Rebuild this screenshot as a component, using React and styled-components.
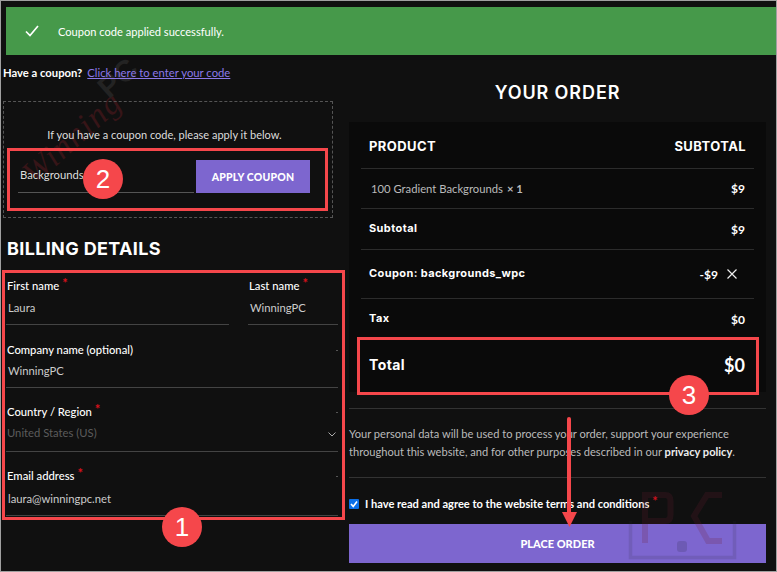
import React from "react";
import styled, { createGlobalStyle } from "styled-components";

const Global = createGlobalStyle`
  html, body {
    margin: 0;
    padding: 0;
    background: #101010;
  }
  * {
    box-sizing: border-box;
  }
`;

const Page = styled.div`
  position: relative;
  width: 777px;
  height: 572px;
  overflow: hidden;
  background: #101010;
  border: 1px solid #a0a0a0;
  color: #fff;
  font-family: Lato, "Liberation Sans", sans-serif;
  font-size: 11.25px;
`;

const Notice = styled.div`
  display: flex;
  align-items: center;
  gap: 19px;
  height: 48px;
  margin: 6px 0 0 5px;
  padding-left: 19px;
  background: #46994a;
  font-size: 11.1px;
`;

const Columns = styled.div`
  position: relative;
  z-index: 1;
  display: flex;
`;

const LeftCol = styled.div`
  width: 348px;
  padding: 10px 0 0 2px;
`;

const RightCol = styled.div`
  width: 417px;
  padding-top: 27px;
`;

const CouponLine = styled.div`
  display: flex;
  gap: 5px;
  font-weight: 700;
  line-height: 16px;
`;

const CouponLink = styled.a`
  color: #8c78e8;
  font-size: 11.3px;
  font-weight: 400;
  text-decoration: underline;
`;

const CouponBox = styled.div`
  width: 330px;
  height: 117px;
  margin-top: 20px;
  padding: 25px 14px 0;
  border: 1px dashed #555;
`;

const CouponHint = styled.p`
  margin: 0 7px 0 0;
  color: #ddd;
  font-size: 11px;
  text-align: center;
  line-height: 16px;
`;

const CouponRow = styled.div`
  display: flex;
  gap: 2px;
  margin-top: 17px;
`;

const CouponInput = styled.div`
  width: 176px;
  height: 33px;
  padding: 8px 2px 0;
  border-bottom: 1px solid #555;
  color: #ddd;
`;

const ApplyButton = styled.div`
  display: flex;
  align-items: center;
  justify-content: center;
  width: 114px;
  height: 33px;
  background: #7d66cf;
  font-size: 10.5px;
  font-weight: 900;
  letter-spacing: 0.2px;
`;

const SectionTitle = styled.h2`
  margin: 20px 0 0 4px;
  font-family: Inter, "Liberation Sans", sans-serif;
  font-size: 18px;
  line-height: 22px;
  font-weight: 700;
  letter-spacing: 0.35px;
`;

const Fields = styled.div`
  display: flex;
  flex-direction: column;
  width: 332px;
  margin: 18px 0 0 3px;
`;

const NameRow = styled.div`
  display: flex;
  gap: 19px;
`;

const Field = styled.div`
  flex: ${(p) => p.$flex || "0 0 auto"};
  width: ${(p) => p.$w || "100%"};
  height: ${(p) => p.$h || 63}px;
  padding-top: ${(p) => p.$top || 0}px;
  border-bottom: 1px solid #444;
`;

const Label = styled.div`
  display: flex;
  justify-content: space-between;
  padding-left: 1px;
  font-weight: 500;
  line-height: 16px;
`;

const Tick = styled.span`
  align-self: center;
  width: 2px;
  height: 1px;
  background: #555;
`;

const Required = styled.span`
  color: #d8101c;
  font-size: 13px;
  font-weight: 700;
  line-height: 0;
  margin-left: 3px;
  vertical-align: 2px;
`;

const Value = styled.div`
  display: flex;
  align-items: center;
  justify-content: space-between;
  margin-top: ${(p) => p.$gap || 6}px;
  padding-left: ${(p) => (p.$flush ? 1 : 2)}px;
  padding-right: 2px;
  color: ${(p) => (p.$muted ? "#5c5c5c" : "#ccc")};
  line-height: 16px;
`;

const Chevron = styled.svg`
  margin-top: 2px;
`;

const OrderTitle = styled.h2`
  margin: 0;
  font-family: Inter, "Liberation Sans", sans-serif;
  font-size: 18px;
  line-height: 22px;
  font-weight: 600;
  letter-spacing: 0.9px;
  text-align: center;
`;

const OrderTable = styled.div`
  margin-top: 18px;
  padding: 0 12px;
  background: #0a0a0a;
  height: 270px;
`;

const OrderRow = styled.div`
  display: flex;
  align-items: center;
  justify-content: space-between;
  height: ${(p) => p.$h}px;
  padding: 0 9px 0 8px;
  border-bottom: ${(p) => (p.$last ? "none" : "1px solid #2c2c2c")};
`;

const HeadRow = styled(OrderRow)`
  padding-top: 1px;
  padding-right: 8px;
`;

const HeadCell = styled.span`
  font-family: Inter, "Liberation Sans", sans-serif;
  font-size: 13px;
  font-weight: 700;
  letter-spacing: 0.4px;
`;

const RowLabel = styled.span`
  margin-bottom: 2px;
  font-family: Inter, "Liberation Sans", sans-serif;
  font-size: ${(p) => p.$size || 11}px;
  font-weight: 700;
  letter-spacing: 0.4px;
`;

const ProductName = styled.span`
  margin-left: 2px;
  color: #bbb;
`;

const ProductQty = styled.span`
  margin-left: 4px;
  font-weight: 700;
`;

const Amount = styled.span`
  display: flex;
  align-items: center;
  gap: 9px;
  font-size: ${(p) => p.$size || 12}px;
  font-weight: 700;
`;

const RemoveIcon = styled.svg`
  margin-right: 8px;
`;

const Divider = styled.div`
  height: 1px;
  background: #333;
  margin-top: ${(p) => p.$top}px;
`;

const Privacy = styled.p`
  margin: 16px 0 0;
  color: #bbb;
  font-size: 11.1px;
  line-height: 18px;

  strong {
    color: #eee;
  }
`;

const Terms = styled.div`
  display: flex;
  align-items: center;
  gap: 6px;
  margin-top: 17px;
  height: 16px;
  font-size: 11.1px;
  font-weight: 700;
`;

const CheckBox = styled.span`
  display: flex;
  align-items: center;
  justify-content: center;
  width: 10px;
  height: 10px;
  margin-top: 2px;
  background: #0b6fe8;
  border-radius: 1px;
`;

const PlaceButton = styled.div`
  display: flex;
  align-items: center;
  justify-content: center;
  height: 39px;
  margin-top: 13px;
  background: #7d66cf;
  font-size: 11px;
  font-weight: 900;
`;

const Frame = styled.div`
  position: absolute;
  z-index: 3;
  left: ${(p) => p.$x}px;
  top: ${(p) => p.$y}px;
  width: ${(p) => p.$w}px;
  height: ${(p) => p.$h}px;
  border: 3px solid #f5474b;
`;

const Badge = styled.div`
  position: absolute;
  z-index: 3;
  left: ${(p) => p.$x - 20}px;
  top: ${(p) => p.$y - 20}px;
  display: flex;
  align-items: center;
  justify-content: center;
  width: 40px;
  height: 40px;
  border-radius: 50%;
  background: #f5474b;
  font-family: "Liberation Sans", sans-serif;
  font-size: 26px;
`;

const Overlay = styled.svg`
  position: absolute;
  z-index: ${(p) => p.$z || 2};
  left: 0;
  top: 0;
  pointer-events: none;
`;

const WatermarkText = styled.div`
  position: absolute;
  left: ${(p) => p.$x}px;
  top: ${(p) => p.$y}px;
  transform: rotate(-42deg);
  line-height: 1;
  letter-spacing: ${(p) => (p.$serif ? 1.5 : 0)}px;
  font-family: ${(p) => (p.$serif ? '"Liberation Serif", serif' : '"Liberation Sans", sans-serif')};
  font-style: ${(p) => (p.$serif ? "italic" : "normal")};
  font-weight: ${(p) => (p.$serif ? 400 : 700)};
  font-size: ${(p) => p.$size}px;
  color: ${(p) => p.$color};
`;

export default function App() {
  return (
    <>
      <Global />
      <Page>
        <WatermarkText $serif $x={11} $y={120} $size={33} $color="#371518">
          Winning
        </WatermarkText>
        <WatermarkText $x={96} $y={62} $size={30} $color="#232323">
          PC
        </WatermarkText>
        <Notice>
          <svg width="14" height="12" viewBox="0 0 14 12">
            <path d="M1 6.5 L5 10.5 L13 1" fill="none" stroke="#fff" strokeWidth="1.7" />
          </svg>
          Coupon code applied successfully.
        </Notice>
        <Columns>
          <LeftCol>
            <CouponLine>
              Have a coupon? <CouponLink>Click here to enter your code</CouponLink>
            </CouponLine>
            <CouponBox>
              <CouponHint>If you have a coupon code, please apply it below.</CouponHint>
              <CouponRow>
                <CouponInput>Backgrounds</CouponInput>
                <ApplyButton>APPLY COUPON</ApplyButton>
              </CouponRow>
            </CouponBox>
            <SectionTitle>BILLING DETAILS</SectionTitle>
            <Fields>
              <NameRow>
                <Field $flex="1" $h={47}>
                  <Label><span>First name<Required>*</Required></span></Label>
                  <Value>Laura</Value>
                </Field>
                <Field $w="90px" $h={47}>
                  <Label><span>Last name<Required>*</Required></span></Label>
                  <Value>WinningPC</Value>
                </Field>
              </NameRow>
              <Field $top={17}>
                <Label><span>Company name (optional)</span><Tick /></Label>
                <Value $gap={5}>WinningPC</Value>
              </Field>
              <Field $h={64} $top={16}>
                <Label><span>Country / Region<Required>*</Required></span><Tick /></Label>
                <Value $muted $flush $gap={5}>
                  United States (US)
                  <Chevron width="8" height="5" viewBox="0 0 8 5">
                    <path d="M0.5 0.5 L4 4 L7.5 0.5" fill="none" stroke="#aaa" strokeWidth="1" />
                  </Chevron>
                </Value>
              </Field>
              <Field $h={64} $top={16}>
                <Label><span>Email address<Required>*</Required></span><Tick /></Label>
                <Value $gap={7}>laura@winningpc.net</Value>
              </Field>
            </Fields>
          </LeftCol>
          <RightCol>
            <OrderTitle>YOUR ORDER</OrderTitle>
            <OrderTable>
              <HeadRow $h={47}>
                <HeadCell>PRODUCT</HeadCell>
                <HeadCell>SUBTOTAL</HeadCell>
              </HeadRow>
              <OrderRow $h={40}>
                <ProductName>100 Gradient Backgrounds<ProductQty>× 1</ProductQty></ProductName>
                <Amount>$9</Amount>
              </OrderRow>
              <OrderRow $h={41}>
                <RowLabel>Subtotal</RowLabel>
                <Amount>$9</Amount>
              </OrderRow>
              <OrderRow $h={49}>
                <RowLabel>Coupon: backgrounds_wpc</RowLabel>
                <Amount>
                  -$9
                  <RemoveIcon width="10" height="10" viewBox="0 0 10 10">
                    <path d="M0.5 0.5 L9.5 9.5 M9.5 0.5 L0.5 9.5" stroke="#eee" strokeWidth="1.2" />
                  </RemoveIcon>
                </Amount>
              </OrderRow>
              <OrderRow $h={40} $last>
                <RowLabel>Tax</RowLabel>
                <Amount>$0</Amount>
              </OrderRow>
              <OrderRow $h={52} $last>
                <RowLabel $size={14}>Total</RowLabel>
                <Amount $size={18}>$0</Amount>
              </OrderRow>
            </OrderTable>
            <Divider $top={16} />
            <Privacy>
              Your personal data will be used to process your order, support your experience
              throughout this website, and for other purposes described in our{" "}
              <strong>privacy policy</strong>.
            </Privacy>
            <Divider $top={16} />
            <Terms>
              <CheckBox>
                <svg width="8" height="8" viewBox="0 0 8 8">
                  <path d="M1 4 L3.2 6.4 L7 1.4" fill="none" stroke="#fff" strokeWidth="1.6" />
                </svg>
              </CheckBox>
              <span>I have read and agree to the website terms and conditions<Required>*</Required></span>
            </Terms>
            <PlaceButton>PLACE ORDER</PlaceButton>
          </RightCol>
        </Columns>

        <Overlay width="775" height="570" viewBox="0 0 775 570">
          <g fill="none" strokeWidth="6" stroke="rgba(110,30,50,0.2)">
            <path d="M644 542 V494 H664 Q669.5 494 669.5 500 V514 Q669.5 520 664 520 H644" />
            <path d="M721 494 H706 L693 515 L707 540 H721" />
          </g>
          <path d="M629.5 520 V556.5 H733.5 V520" fill="none" stroke="rgba(40,40,60,0.14)" strokeWidth="3.5" />
          <rect x="676" y="540" width="10" height="11" rx="3" fill="rgba(40,40,60,0.18)" />
        </Overlay>

        <Frame $x={6} $y={147} $w={321} $h={63} />
        <Frame $x={1} $y={269} $w={343} $h={250} />
        <Frame $x={356} $y={336} $w={402} $h={58} />
        <Badge $x={102} $y={178}>2</Badge>
        <Badge $x={181} $y={526}>1</Badge>
        <Badge $x={688} $y={394}>3</Badge>
        <Overlay $z={3} width="775" height="570" viewBox="0 0 775 570">
          <path d="M568 418 V512" stroke="#f5474b" strokeWidth="4" strokeLinecap="round" />
          <path d="M561 511 H576 L568.5 526 Z" fill="#f5474b" />
        </Overlay>
      </Page>
    </>
  );
}
